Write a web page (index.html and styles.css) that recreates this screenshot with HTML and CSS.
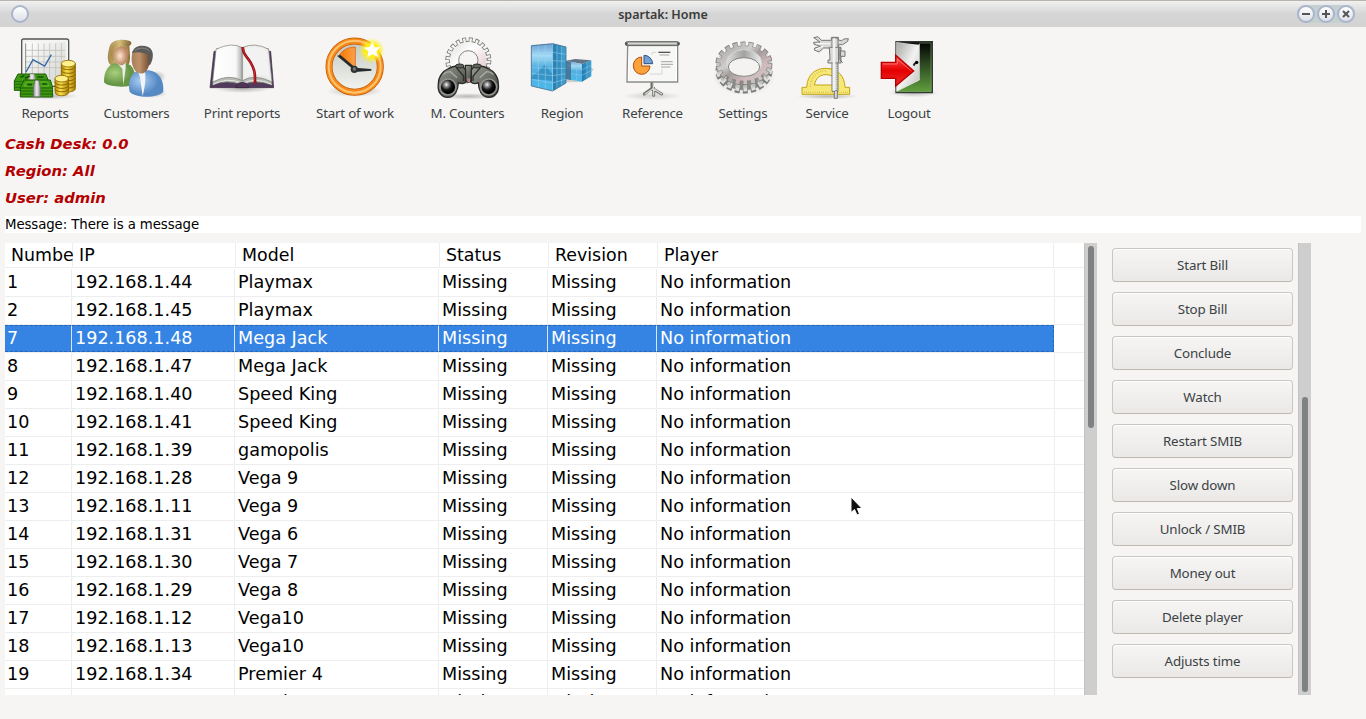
FILE: index.html
```html
<!DOCTYPE html>
<html lang="en">
<head>
<meta charset="utf-8">
<title>spartak: Home</title>
<link rel="stylesheet" href="styles.css">
</head>
<body>
<header class="titlebar">
  <span class="orb"></span>
  <h1 class="title">spartak: Home</h1>
  <div class="controls">
    <span class="orb"><svg viewBox="0 0 18 18"><path d="M5 9h8"/></svg></span>
    <span class="orb"><svg viewBox="0 0 18 18"><path d="M5 9h8M9 5v8"/></svg></span>
    <span class="orb"><svg viewBox="0 0 18 18"><path d="M6 6l6 6M12 6l-6 6"/></svg></span>
  </div>
</header>

<nav class="toolbar">
  <div class="tool">
    <svg class="icon" viewBox="39 24 192 192">
      <defs>
        <linearGradient id="paper" x2="1" y2="1"><stop stop-color="#fff"/><stop offset="1" stop-color="#d3d5d0"/></linearGradient>
        <linearGradient id="coin"><stop stop-color="#b98b00"/><stop offset=".4" stop-color="#fbe34d"/><stop offset="1" stop-color="#a87a00"/></linearGradient>
        <linearGradient id="band"><stop stop-color="#888"/><stop offset=".5" stop-color="#eee"/><stop offset="1" stop-color="#888"/></linearGradient>
        <radialGradient id="shade"><stop stop-color="#000" stop-opacity=".25"/><stop offset="1" stop-color="#000" stop-opacity="0"/></radialGradient>
      </defs>
      <ellipse cx="145" cy="204" rx="90" ry="11" fill="url(#shade)"/>
      <rect x="65" y="33" width="141" height="142" rx="6" fill="#f4f4f2" stroke="#555753" stroke-width="4"/>
      <rect x="74" y="42" width="123" height="124" fill="url(#paper)"/>
      <path d="M76 67H196M76 85H196M76 102H196M76 119H196M97 46V140M115 46V140M132 46V140M149 46V150M167 46V150M184 46V110" stroke="#bfc1bd" stroke-width="2.5" fill="none"/>
      <path d="M77 46V140" stroke="#888a85" stroke-width="3"/>
      <path d="M78 132L99 95L134 114L154 80" fill="none" stroke="#3465a4" stroke-width="4"/>
      <g stroke="#8a6500" stroke-width="2.5" fill="url(#coin)">
        <path d="M184 107V182a21 10 0 0 0 42 0V107Z"/>
        <ellipse cx="205" cy="107" rx="21" ry="10" fill="#fdf08a"/>
        <path d="M184 116a21 9 0 0 0 42 0M184 127a21 9 0 0 0 42 0M184 138a21 9 0 0 0 42 0M184 149a21 9 0 0 0 42 0M184 160a21 9 0 0 0 42 0M184 171a21 9 0 0 0 42 0" fill="none" stroke-width="3"/>
        <path d="M165 152V193a20 10 0 0 0 41 0V152Z"/>
        <ellipse cx="185" cy="152" rx="20" ry="10" fill="#fdf08a"/>
        <path d="M165 162a20 9 0 0 0 41 0M165 172a20 9 0 0 0 41 0M165 182a20 9 0 0 0 41 0" fill="none" stroke-width="3"/>
      </g>
      <path d="M43 159L54 138H137L146 160V187H43Z" fill="#3c9b10" stroke="#1c5a02" stroke-width="3"/>
      <path d="M43 161H146M43 169H146M43 178H146" stroke="#205f05" stroke-width="2.5"/>
      <path d="M83 160L90 138H103L108 160Z" fill="url(#band)" stroke="#777" stroke-width="1"/>
      <path d="M61 178L72 156H151L158 178V207H61Z" fill="#3c9b10" stroke="#1c5a02" stroke-width="3"/>
      <path d="M61 180H158M61 189H158M61 198H158" stroke="#205f05" stroke-width="3"/>
      <path d="M80 162L73 174H146L140 162Z" fill="none" stroke="#77c738" stroke-width="2"/>
      <path d="M61 148l12-5M75 151l14-7M112 147h19M82 170h14M127 168h15" stroke="#174d03" stroke-width="5"/>
      <path d="M100 178L105 157H116L121 178V206H100Z" fill="url(#band)" stroke="#666" stroke-width="2"/>
    </svg>
    <span class="label">Reports</span>
  </div>

  <div class="tool">
    <svg class="icon" viewBox="316 24 192 192">
      <defs>
        <radialGradient id="green" cx=".35" cy=".4"><stop stop-color="#a9cf7c"/><stop offset="1" stop-color="#659545"/></radialGradient>
        <radialGradient id="blue" cx=".35" cy=".4"><stop stop-color="#abd0f5"/><stop offset="1" stop-color="#5689c4"/></radialGradient>
        <radialGradient id="skin1" cx=".4"><stop stop-color="#ffe6d0"/><stop offset="1" stop-color="#bb8663"/></radialGradient>
        <linearGradient id="skin2"><stop stop-color="#a97d5b"/><stop offset=".4" stop-color="#c0926b"/><stop offset="1" stop-color="#67432a"/></linearGradient>
        <linearGradient id="hair"><stop stop-color="#a5894c"/><stop offset=".5" stop-color="#d5bd7a"/><stop offset="1" stop-color="#806431"/></linearGradient>
      </defs>
      <ellipse cx="472" cy="146" rx="28" ry="18" fill="url(#shade)"/>
      <ellipse cx="455" cy="197" rx="48" ry="13" fill="url(#shade)"/>
      <path d="M330 109C320 94 326 70 330 55C336 36 365 32 388 38C398 42 397 48 389 54C390 75 394 95 388 108C373 121 347 122 330 109Z" fill="url(#hair)"/>
      <path d="M313 163C312 127 329 108 347 106H377C401 110 409 132 407 169C386 180 324 178 313 163Z" fill="url(#green)"/>
      <path d="M351 104L368 122L371 172L378 120V102Z" fill="#eeefec"/>
      <path d="M344 75C344 50 385 49 386 70C388 92 378 112 365 112C351 110 343 95 344 75Z" fill="url(#skin1)"/>
      <path d="M341 89C340 66 348 54 362 54L389 52C385 43 355 40 340 52C331 65 331 90 341 100Z" fill="url(#hair)"/>
      <path d="M388 180C387 145 403 129 421 127H448C480 133 493 157 491 191C475 211 407 211 390 191Z" fill="url(#blue)"/>
      <path d="M413 126L421 147L429 204C436 177 439 151 436 132Z" fill="#f2f5f8"/>
      <path d="M397 79C401 54 427 51 445 61C461 71 453 110 440 129C426 144 408 135 402 121C395 106 395 94 397 79Z" fill="url(#skin2)"/>
      <path d="M397 76C402 53 425 49 446 57C466 66 461 96 451 111C444 112 450 91 445 80C433 76 413 69 397 76Z" fill="#5b5b59"/>
      <path d="M405 67C422 57 437 59 449 68" stroke="#8a8a87" stroke-width="3" fill="none"/>
    </svg>
    <span class="label">Customers</span>
  </div>

  <div class="tool">
    <svg class="icon" viewBox="60 24 192 192">
      <defs><linearGradient id="page"><stop stop-color="#fff"/><stop offset=".78" stop-color="#f8f8f8"/><stop offset="1" stop-color="#aaa"/></linearGradient></defs>
      <ellipse cx="157" cy="183" rx="85" ry="12" fill="url(#shade)"/>
      <path d="M72 70H242L251 179H60Z" fill="#513a5c" stroke="#39273f" stroke-width="2"/>
      <path d="M68 171L80 62H235L246 171Q195 153 157 171Q110 153 68 171Z" fill="#b7bbb3" stroke="#70766c" stroke-width="2"/>
      <path d="M78 64Q125 41 157 59V158Q116 136 68 162Z" fill="url(#page)" stroke="#777c74" stroke-width="2"/>
      <path d="M157 59Q194 41 236 64L246 162Q195 136 157 158Z" fill="#ecedeb" stroke="#777c74" stroke-width="2"/>
      <path d="M163 64Q194 49 229 66L238 145Q195 132 163 148Z" fill="#f2f2f2"/>
      <path d="M69 169Q114 147 154 165M161 165Q197 147 245 169" stroke="#e7eae4" stroke-width="3" fill="none"/>
      <path d="M137 179Q139 164 157 163Q174 164 176 179Z" fill="#503559" stroke="#2f2037" stroke-width="2"/>
      <path d="M158 57C160 83 167 79 182 104C192 121 196 133 195 163" fill="none" stroke="#8c1018" stroke-width="8"/>
      <path d="M159 58C162 82 169 82 184 108C193 122 195 134 194 157" fill="none" stroke="#d72b32" stroke-width="3"/>
      <path d="M189 168L194 155L201 164" fill="#a91620"/>
    </svg>
    <span class="label">Print reports</span>
  </div>

  <div class="tool">
    <svg class="icon" viewBox="399 24 192 192">
      <defs>
        <radialGradient id="glow"><stop offset=".5" stop-color="#ffee19"/><stop offset="1" stop-color="#fff51f" stop-opacity="0"/></radialGradient>
        <linearGradient id="face" x2="0" y2="1"><stop stop-color="#c4c8bf"/><stop offset="1" stop-color="#f4f5f2"/></linearGradient>
        <linearGradient id="wedge" x2="1"><stop stop-color="#f57900"/><stop offset="1" stop-color="#fca04a"/></linearGradient>
      </defs>
      <ellipse cx="494" cy="189" rx="83" ry="18" fill="url(#shade)"/>
      <circle cx="494" cy="116" r="77" fill="url(#face)" stroke="#c35900" stroke-width="21"/>
      <circle cx="494" cy="116" r="77" fill="none" stroke="#f58a1d" stroke-width="17"/>
      <circle cx="494" cy="116" r="78" fill="none" stroke="#ffc46e" stroke-width="6"/>
      <path d="M492 119L448 80Q466 56 496 57V119Z" fill="url(#wedge)" stroke="#c95700" stroke-width="2"/>
      <path d="M492 125L443 84L451 82L495 119Z" fill="#26292a" stroke="#26292a" stroke-width="2"/>
      <path d="M494 119L544 123V128L494 132Z" fill="#26292a"/>
      <circle cx="493" cy="124" r="11" fill="#2e3436"/><circle cx="493" cy="123" r="5" fill="#71777a"/>
      <circle cx="545" cy="68" r="39" fill="url(#glow)"/>
      <path d="M547 41L554 58L571 58L559 70L565 88L548 79L532 88L535 70L521 59L539 57Z" fill="#fffffb"/>
    </svg>
    <span class="label">Start of work</span>
  </div>

  <div class="tool">
    <svg class="icon" viewBox="48 24 192 192">
      <defs>
        <linearGradient id="scope" x2="1" y2="1"><stop stop-color="#96998f"/><stop offset=".55" stop-color="#686b64"/><stop offset="1" stop-color="#32352f"/></linearGradient>
        <radialGradient id="lens" cx=".4" cy=".35"><stop stop-color="#f5f5f5"/><stop offset=".3" stop-color="#888"/><stop offset=".65" stop-color="#191919"/><stop offset="1"/></radialGradient>
        <linearGradient id="gearlight" x2="1" y2="1"><stop stop-color="#ddd"/><stop offset=".4" stop-color="#fff"/><stop offset=".7" stop-color="#edd9df"/><stop offset="1" stop-color="#ccc"/></linearGradient>
      </defs>
      <circle cx="145" cy="97" r="60" fill="none" stroke="#777975" stroke-width="18" pathLength="40" stroke-dasharray="1.2 .8"/>
      <circle cx="145" cy="97" r="57" fill="url(#gearlight)" stroke="#777975" stroke-width="3"/>
      <circle cx="145" cy="97" r="60" fill="none" stroke="#f4f3f1" stroke-width="13" pathLength="40" stroke-dasharray=".75 1.25" stroke-dashoffset="-.22"/>
      <circle cx="145" cy="97" r="29" fill="#f6f5f4" stroke="#81837f" stroke-width="3"/>
      <ellipse cx="145" cy="205" rx="87" ry="10" fill="url(#shade)"/>
      <g fill="url(#scope)" stroke="#292c29" stroke-width="4" stroke-linejoin="round">
        <path d="M136 112H155V157Q146 169 136 157Z"/>
        <path d="M55 168C55 144 71 128 83 123Q102 111 128 115L137 126V163Q129 170 115 164C114 185 106 208 83 208C63 208 52 190 55 168Z"/>
        <path d="M235 168C235 144 219 128 207 123Q188 111 162 115L154 126V163Q161 170 175 164C176 185 184 208 207 208C227 208 238 190 235 168Z"/>
      </g>
      <path d="M70 139Q78 131 91 131L111 149M220 139Q212 131 199 131L179 149" fill="none" stroke="#aaa" stroke-width="4"/>
      <path d="M109 119L131 145V159M181 119L159 145V159" fill="none" stroke="#2b2e2a" stroke-width="4"/>
      <ellipse cx="119" cy="114" rx="13" ry="6" fill="#62655e" stroke="#272a26" stroke-width="3"/>
      <ellipse cx="171" cy="114" rx="13" ry="6" fill="#62655e" stroke="#272a26" stroke-width="3"/>
      <circle cx="84" cy="177" r="24" fill="url(#lens)" stroke="#92958d" stroke-width="5"/>
      <circle cx="206" cy="177" r="24" fill="url(#lens)" stroke="#92958d" stroke-width="5"/>
      <path d="M142 151h8v12h-8Z" fill="#b98480"/>
    </svg>
    <span class="label">M. Counters</span>
  </div>

  <div class="tool">
    <svg class="icon" viewBox="330 24 192 192">
      <defs>
        <linearGradient id="glass" x2="0" y2="1"><stop stop-color="#6a9ed4"/><stop offset=".25" stop-color="#a3daf5"/><stop offset=".5" stop-color="#53aee0"/><stop offset="1" stop-color="#4bb9ea"/></linearGradient>
        <linearGradient id="side" x2="1"><stop stop-color="#2479ad"/><stop offset="1" stop-color="#42a3d3"/></linearGradient>
      </defs>
      <path d="M397 189L438 163L485 162L522 124L507 116L438 143Z" fill="#777" opacity=".3"/>
      <path d="M438 98L465 93L514 97L486 108Z" fill="#607485"/>
      <path d="M438 98L486 108V161L438 153Z" fill="url(#glass)"/>
      <path d="M438 98L453 101V157L438 153Z" fill="#416c89" opacity=".8"/>
      <path d="M486 108L514 97V145L486 161Z" fill="url(#side)"/>
      <path d="M453 120L486 125L514 112M453 137L486 142L514 128M470 105V159M501 103V152" fill="none" stroke="#8ccbe8" stroke-width="1.5"/>
      <path d="M334 53L398 47L438 57L398 67Z" fill="#4d79a8"/>
      <path d="M334 53L398 47V189L334 174Z" fill="url(#glass)"/>
      <path d="M398 47L438 57V165L398 189Z" fill="url(#side)"/>
      <path d="M335 145L354 132L374 110L397 138V158L335 153Z" fill="#237baf" opacity=".55"/>
      <path d="M334 75L398 73L438 79M334 98L398 98L438 100M334 119L398 121L438 121M334 136L398 143L438 137M334 154L398 165L438 153M355 52V178M376 50V183M411 51V180M425 54V172" fill="none" stroke="#9bd5ef" stroke-width="1.5"/>
      <path d="M334 53L398 47L438 57V165L398 189L334 174Z" fill="none" stroke="#42708e" stroke-width="2.5"/>
      <path d="M398 48V188" stroke="#9bd5ef" stroke-width="2"/>
    </svg>
    <span class="label">Region</span>
  </div>

  <div class="tool">
    <svg class="icon" viewBox="64 24 192 192">
      <ellipse cx="158" cy="204" rx="92" ry="13" fill="url(#shade)" opacity=".6"/>
      <path d="M157 162V181L134 198M157 181L186 198M162 181V202" fill="none" stroke="#6c6f69" stroke-width="9" stroke-linecap="round"/>
      <path d="M161 163V182L136 198M161 182L186 198M162 183V201" fill="none" stroke="#d5d7d3" stroke-width="4" stroke-linecap="round"/>
      <path d="M84 51H234V162H82Z" fill="#fff" stroke="#898c86" stroke-width="4"/>
      <path d="M88 57H228V158H87Z" fill="#f7f7f6"/>
      <rect x="77" y="41" width="162" height="12" rx="6" fill="#a8aaa5" stroke="#60635e" stroke-width="3"/>
      <path d="M85 46H231" stroke="#e1e2df" stroke-width="3"/>
      <circle cx="80" cy="47" r="4" fill="#555"/><circle cx="236" cy="47" r="4" fill="#555"/>
      <path d="M126 87A25 26 0 1 0 151 114H126Z" fill="#fba33a" stroke="#b64b0a" stroke-width="3"/>
      <path d="M133 82A26 26 0 0 1 159 107H133Z" fill="#75a0d5" stroke="#285389" stroke-width="3"/>
      <path d="M157 81V73H170M150 138H187V124" fill="none" stroke="#d5d7d3" stroke-width="3"/>
      <path d="M176 73H212" stroke="#555" stroke-width="4"/>
      <path d="M180 81H209M184 101H219M184 109H220M184 117H212" stroke="#a4a5a3" stroke-width="3"/>
    </svg>
    <span class="label">Reference</span>
  </div>

  <div class="tool">
    <svg class="icon" viewBox="334 24 192 192">
      <defs>
        <linearGradient id="gear" x2="1" y2="1"><stop stop-color="#a5a3a2"/><stop offset=".35" stop-color="#d1cdcd"/><stop offset=".5" stop-color="#a39b9b"/><stop offset=".72" stop-color="#d1b9bd"/><stop offset="1" stop-color="#c8c7c7"/></linearGradient>
        <linearGradient id="rim"><stop stop-color="#ddd"/><stop offset=".5" stop-color="#a2a2a1"/><stop offset="1" stop-color="#efefef"/></linearGradient>
      </defs>
      <ellipse cx="433" cy="145" rx="95" ry="58" fill="url(#shade)"/>
      <g fill="none">
        <ellipse cx="433" cy="129" rx="76" ry="58" fill="#898b88" stroke="#7b7d79" stroke-width="19" pathLength="36" stroke-dasharray="1.25 .75"/>
        <ellipse cx="433" cy="124" rx="76" ry="58" stroke="#dededc" stroke-width="17" pathLength="36" stroke-dasharray=".95 1.05" stroke-dashoffset="-.15"/>
        <ellipse cx="433" cy="115" rx="76" ry="58" stroke="#c3c4c1" stroke-width="17" pathLength="36" stroke-dasharray=".95 1.05" stroke-dashoffset="-.15"/>
        <ellipse cx="433" cy="106" rx="76" ry="56" stroke="#7b7d79" stroke-width="19" pathLength="36" stroke-dasharray="1.25 .75"/>
        <ellipse cx="433" cy="106" rx="72" ry="53" fill="url(#gear)" stroke="#8b8d89" stroke-width="2"/>
        <ellipse cx="433" cy="106" rx="75" ry="55" stroke="url(#gear)" stroke-width="16" pathLength="36" stroke-dasharray="1 1" stroke-dashoffset="-.125"/>
      </g>
      <ellipse cx="433" cy="105" rx="53" ry="40" fill="url(#rim)" stroke="#d4d5d3" stroke-width="3"/>
      <ellipse cx="433" cy="117" rx="47" ry="28" fill="#f4f3f2" stroke="#858783" stroke-width="3"/>
    </svg>
    <span class="label">Settings</span>
  </div>

  <div class="tool">
    <svg class="icon" viewBox="45 24 192 192">
      <ellipse cx="142" cy="205" rx="94" ry="9" fill="url(#shade)"/>
      <path fill-rule="evenodd" d="M66 178H80C82 139 106 121 138 121C171 121 194 142 195 178H209V199H66ZM103 171H173C168 149 155 140 138 140C119 140 108 150 103 171Z" fill="#f7e775" stroke="#c3a318" stroke-width="3"/>
      <path d="M72 193H205M91 176C94 142 112 128 138 129" stroke="#b39a2a" stroke-width="4" stroke-dasharray="1.5 5" fill="none"/>
      <g fill="#d8d9d7" stroke="#777975" stroke-width="3">
        <path d="M101 29L114 26L124 37H154V28H175V36L185 38L192 33L205 32L203 40L188 50H176V67H151L147 60H131L117 72L103 66L104 60L122 55L102 49L101 43L120 42Z"/>
        <path d="M156 30H174V190H156Z"/>
        <path d="M148 58H183V105H144V96H150Z"/>
        <path d="M181 69H195V85H181ZM163 188H172V211H163Z"/>
      </g>
      <path d="M158 31H166V188H158Z" fill="#f1f2ef"/>
      <path d="M171 102V183" stroke="#777975" stroke-width="5" stroke-dasharray="1.5 5"/>
      <path d="M180 58V96L188 104M176 60V104" stroke="#696b66" stroke-width="3" fill="none"/>
      <path d="M108 47H150M108 64L130 54" stroke="#fff" stroke-width="3"/>
    </svg>
    <span class="label">Service</span>
  </div>

  <div class="tool">
    <svg class="icon" viewBox="291 24 192 192">
      <defs>
        <linearGradient id="exit" x2="0" y2="1"><stop/><stop offset=".4" stop-color="#2a4220"/><stop offset="1" stop-color="#61a13d"/></linearGradient>
        <linearGradient id="door" x2="1" y2="1"><stop stop-color="#a7a9a4"/><stop offset=".5" stop-color="#f2f2f1"/><stop offset="1" stop-color="#bfc0bd"/></linearGradient>
        <linearGradient id="arrow" x2="0" y2="1"><stop stop-color="#ff5252"/><stop offset=".5" stop-color="#e50000"/><stop offset="1" stop-color="#ef3030"/></linearGradient>
      </defs>
      <ellipse cx="401" cy="194" rx="75" ry="14" fill="url(#shade)"/>
      <path d="M348 41H457V194H348Z" fill="url(#exit)" stroke="#343834" stroke-width="4"/>
      <path d="M352 45H453V190H352" fill="none" stroke="#779a60" stroke-width="2"/>
      <path d="M350 43L418 48V156L350 190Z" fill="url(#door)" stroke="#eee" stroke-width="2"/>
      <path d="M351 43H419L416 50Z" fill="#111"/>
      <path d="M401 113Q405 101 413 106" stroke="#222" stroke-width="6" fill="none"/><circle cx="410" cy="103" r="5"/>
      <path d="M304 103H347V82L401 129L347 174V151H304Z" fill="url(#arrow)" stroke="#b60000" stroke-width="4"/>
      <path d="M309 108H352V93L394 129" stroke="#ff9191" stroke-width="2" fill="none"/>
    </svg>
    <span class="label">Logout</span>
  </div>
</nav>

<section class="facts">
  <p>Cash Desk: 0.0</p>
  <p>Region: All</p>
  <p>User: admin</p>
</section>
<p class="message">Message: There is a message</p>

<main class="main">
  <section class="list">
    <div class="rows">
      <div class="row head"><span>Numbe</span><span>IP</span><span>Model</span><span>Status</span><span>Revision</span><span>Player</span></div>
      <div class="row"><span>1</span><span>192.168.1.44</span><span>Playmax</span><span>Missing</span><span>Missing</span><span>No information</span></div>
      <div class="row"><span>2</span><span>192.168.1.45</span><span>Playmax</span><span>Missing</span><span>Missing</span><span>No information</span></div>
      <div class="row selected"><span>7</span><span>192.168.1.48</span><span>Mega Jack</span><span>Missing</span><span>Missing</span><span>No information</span></div>
      <div class="row"><span>8</span><span>192.168.1.47</span><span>Mega Jack</span><span>Missing</span><span>Missing</span><span>No information</span></div>
      <div class="row"><span>9</span><span>192.168.1.40</span><span>Speed King</span><span>Missing</span><span>Missing</span><span>No information</span></div>
      <div class="row"><span>10</span><span>192.168.1.41</span><span>Speed King</span><span>Missing</span><span>Missing</span><span>No information</span></div>
      <div class="row"><span>11</span><span>192.168.1.39</span><span>gamopolis</span><span>Missing</span><span>Missing</span><span>No information</span></div>
      <div class="row"><span>12</span><span>192.168.1.28</span><span>Vega 9</span><span>Missing</span><span>Missing</span><span>No information</span></div>
      <div class="row"><span>13</span><span>192.168.1.11</span><span>Vega 9</span><span>Missing</span><span>Missing</span><span>No information</span></div>
      <div class="row"><span>14</span><span>192.168.1.31</span><span>Vega 6</span><span>Missing</span><span>Missing</span><span>No information</span></div>
      <div class="row"><span>15</span><span>192.168.1.30</span><span>Vega 7</span><span>Missing</span><span>Missing</span><span>No information</span></div>
      <div class="row"><span>16</span><span>192.168.1.29</span><span>Vega 8</span><span>Missing</span><span>Missing</span><span>No information</span></div>
      <div class="row"><span>17</span><span>192.168.1.12</span><span>Vega10</span><span>Missing</span><span>Missing</span><span>No information</span></div>
      <div class="row"><span>18</span><span>192.168.1.13</span><span>Vega10</span><span>Missing</span><span>Missing</span><span>No information</span></div>
      <div class="row"><span>19</span><span>192.168.1.34</span><span>Premier 4</span><span>Missing</span><span>Missing</span><span>No information</span></div>
      <div class="row"><span></span><span></span><span>Premier 4</span><span>Missing</span><span>Missing</span><span>No information</span></div>
    </div>
    <div class="scroll scroll-list"><i class="thumb"></i></div>
  </section>
  <aside class="actions">
    <button>Start Bill</button>
    <button>Stop Bill</button>
    <button>Conclude</button>
    <button>Watch</button>
    <button>Restart SMIB</button>
    <button>Slow down</button>
    <button>Unlock / SMIB</button>
    <button>Money out</button>
    <button>Delete player</button>
    <button>Adjusts time</button>
  </aside>
  <div class="scroll scroll-actions"><i class="thumb"></i></div>
</main>
<svg class="cursor" viewBox="0 0 14 22"><path d="M1 1V16.500L4.500 13.500L7 19L9.500 18L7.300 12.500H12Z" fill="#111" stroke="#fff" stroke-width="1"/></svg>
</body>
</html>
```
FILE: styles.css
```css
* { box-sizing: border-box; }
body { margin: 0; height: 719px; overflow: hidden; background: #f6f5f4; color: #000; font-family: "DejaVu Sans", sans-serif; }
p, h1 { margin: 0; }
.titlebar { display: flex; align-items: center; justify-content: space-between; height: 27px; padding: 0 11px; border-top: 1px solid #b9b3ad; background: linear-gradient(#f1f1f1, #d5d5d5 50%, #d3d3d3); }
.title { padding-top: 1px; font: 600 12.5px/20px "Noto Sans", sans-serif; color: #3b3b3b; }
.controls { display: flex; gap: 2px; background: #c5d0d0; border-radius: 8px; }
.orb { display: block; width: 18px; height: 18px; border: 2px solid #aab4cc; border-radius: 50%; background: linear-gradient(#fff, #dde0e7); }
.orb svg { display: block; width: 18px; height: 18px; margin: -2px; fill: none; stroke: #555; stroke-width: 2; }
.toolbar { display: grid; grid-template-columns: 90px 93px 118px 108px 117px 72px 109px 72px 96px 68px; height: 104px; padding-top: 9px; }
.tool { display: flex; flex-direction: column; align-items: center; }
.icon { width: 64px; height: 64px; overflow: visible; }
.label { margin-top: 4px; font: 13.33px/18px "Noto Sans", sans-serif; letter-spacing: -.22px; color: #3b4245; white-space: nowrap; }
.facts { margin-top: -1px; padding-left: 5px; font-size: 14.8px; font-weight: bold; font-style: italic; line-height: 27px; color: #b40000; }
.message { height: 17px; margin: 5px 5px 10px; background: #fff; font-size: 13.33px; line-height: 17px; letter-spacing: -.1px; }
.main { display: flex; height: 452px; padding-left: 5px; }
.list { display: flex; width: 1092px; background: #fff; overflow: hidden; }
.rows { width: 1079px; overflow: hidden; }
.row { display: grid; grid-template-columns: 67px 163px 204px 109px 109px 398px; height: 28px; border-bottom: 1px solid #eee; font-size: 17.6px; line-height: 27px; white-space: nowrap; }
.row span { padding-left: 3px; border-right: 1px solid #eee; }
.row span:first-child { padding-left: 2px; }
.head { grid-template-columns: 68px 163px 204px 109px 109px 396px; height: 25px; margin-bottom: 1px; font-size: 17.4px; line-height: 24px; }
.head span, .head span:first-child { padding-left: 6px; }
.selected { color: #fff; }
.selected span { background: #3584e4; border-top: 1px dashed #2566b5; border-bottom: 1px dashed #2566b5; border-right-color: #d9e6f6; line-height: 25px; }
.selected span:last-child { margin-right: 1px; border-right: 1px dashed #2566b5; }
.scroll { flex: none; width: 13px; background: #cecece; border-left: 1px solid #c5c1bc; padding: 3px 3px 0; }
.thumb { display: block; width: 6px; border-radius: 3px; background: #7e8282; }
.scroll-list .thumb { height: 182px; }
.scroll-actions .thumb { height: 295px; margin-top: 151px; }
.actions { display: flex; flex-direction: column; gap: 10px; width: 201px; padding: 5px 5px 0 15px; }
.actions button { height: 34px; padding: 0; border: 1px solid #cbc6c1; border-bottom-color: #bfb8b1; border-radius: 4px; background: linear-gradient(#f6f5f4, #eae9e7); box-shadow: inset 0 1px #fff; font: 13.33px/18px "Noto Sans", sans-serif; letter-spacing: -.15px; color: #3b4245; }
.cursor { position: absolute; left: 850px; top: 496px; width: 14px; height: 22px; }
```
